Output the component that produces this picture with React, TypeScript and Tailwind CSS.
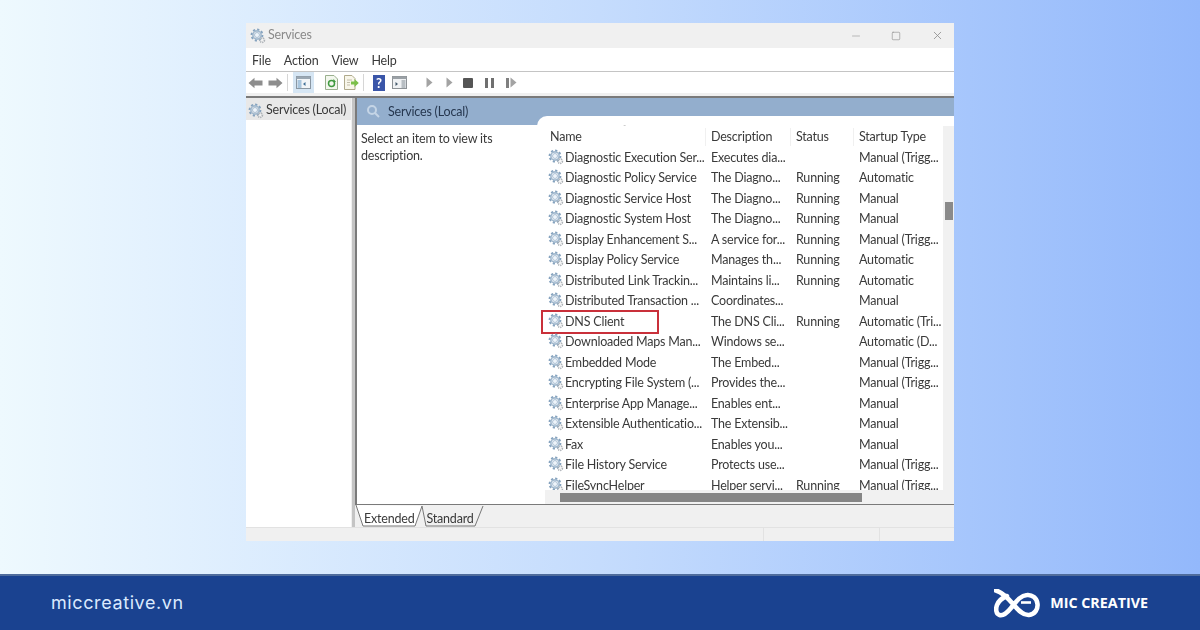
import { Minus, Square, X } from 'lucide-react';

interface ServiceRow {
  name: string;
  description: string;
  status: string;
  startup: string;
}

const rows: ServiceRow[] = [
  { name: 'Diagnostic Execution Ser...', description: 'Executes dia...', status: '', startup: 'Manual (Trigg...' },
  { name: 'Diagnostic Policy Service', description: 'The Diagno...', status: 'Running', startup: 'Automatic' },
  { name: 'Diagnostic Service Host', description: 'The Diagno...', status: 'Running', startup: 'Manual' },
  { name: 'Diagnostic System Host', description: 'The Diagno...', status: 'Running', startup: 'Manual' },
  { name: 'Display Enhancement S...', description: 'A service for...', status: 'Running', startup: 'Manual (Trigg...' },
  { name: 'Display Policy Service', description: 'Manages th...', status: 'Running', startup: 'Automatic' },
  { name: 'Distributed Link Trackin...', description: 'Maintains li...', status: 'Running', startup: 'Automatic' },
  { name: 'Distributed Transaction ...', description: 'Coordinates...', status: '', startup: 'Manual' },
  { name: 'DNS Client', description: 'The DNS Cli...', status: 'Running', startup: 'Automatic (Tri...' },
  { name: 'Downloaded Maps Man...', description: 'Windows se...', status: '', startup: 'Automatic (D...' },
  { name: 'Embedded Mode', description: 'The Embed...', status: '', startup: 'Manual (Trigg...' },
  { name: 'Encrypting File System (...', description: 'Provides the...', status: '', startup: 'Manual (Trigg...' },
  { name: 'Enterprise App Manage...', description: 'Enables ent...', status: '', startup: 'Manual' },
  { name: 'Extensible Authenticatio...', description: 'The Extensib...', status: '', startup: 'Manual' },
  { name: 'Fax', description: 'Enables you...', status: '', startup: 'Manual' },
  { name: 'File History Service', description: 'Protects use...', status: '', startup: 'Manual (Trigg...' },
  { name: 'FileSyncHelper', description: 'Helper servi...', status: 'Running', startup: 'Manual (Trigg...' },
];

function GearIcon({ className }: { className?: string }) {
  return (
    <svg viewBox="0 0 16 16" className={className} fill="none">
      <circle cx="7" cy="7" r="5.2" stroke="#85a2be" strokeWidth="2.4" strokeDasharray="2.1 1.9" />
      <circle cx="7" cy="7" r="4.1" stroke="#a3bacf" strokeWidth="1.6" />
      <circle cx="7" cy="7" r="2.5" fill="#eef4fa" stroke="#8faac4" strokeWidth="0.7" />
      <circle cx="12.2" cy="12.2" r="2.2" stroke="#adb2b7" strokeWidth="1.6" strokeDasharray="1.2 0.8" />
      <circle cx="12.2" cy="12.2" r="0.9" fill="#f2f2f2" />
    </svg>
  );
}

function ArrowIcon({ flip }: { flip?: boolean }) {
  return (
    <svg viewBox="0 0 15 12" className={`w-[15px] h-[12px] ${flip ? '-scale-x-100' : ''}`}>
      <path d="M0.5 6 L6.5 0.8 V3.6 H14.5 V8.4 H6.5 V11.2 Z" fill="#8d8d8d" />
    </svg>
  );
}

function PlayIcon() {
  return (
    <svg viewBox="0 0 7 11" className="w-[7px] h-[11px]">
      <path d="M0.5 0.5 L6.5 5.5 L0.5 10.5 Z" fill="#a3a3a3" />
    </svg>
  );
}

function Toolbar() {
  return (
    <div className="h-[21px] bg-white flex items-center pl-[2px]">
      <ArrowIcon />
      <span className="ml-[5px]"><ArrowIcon flip /></span>
      <span className="ml-[4px] w-px h-[17px] bg-[#d6d6d6]" />
      <span className="ml-[5px] w-[21px] h-[21px] bg-[#d6e6f4] flex items-center justify-center">
        <svg viewBox="0 0 15 13" className="w-[15px] h-[13px]">
          <rect x="0.5" y="0.5" width="14" height="12" fill="#f2f5f8" stroke="#8a97a3" />
          <rect x="0.5" y="0.5" width="14" height="2.5" fill="#9aa7b3" />
          <rect x="1.5" y="4" width="4" height="8" fill="#a9c6de" />
          <path d="M9.5 6 L7 8 L9.5 10 Z" fill="#3f6f96" />
        </svg>
      </span>
      <span className="ml-[11px]">
        <svg viewBox="0 0 13 15" className="w-[13px] h-[15px]">
          <path d="M0.5 0.5 H9 L12.5 4 V14.5 H0.5 Z" fill="#f3f7ee" stroke="#9ab08e" />
          <circle cx="6.500" cy="8.500" r="3" fill="none" stroke="#3f9a3f" strokeWidth="1.5" />
          <path d="M8.5 3.8 V7 H11 Z" fill="#3f9a3f" />
        </svg>
      </span>
      <span className="ml-[6px]">
        <svg viewBox="0 0 15 15" className="w-[15px] h-[15px]">
          <path d="M0.5 0.5 H8 L11 3.5 V14.5 H0.5 Z" fill="#f8f6ea" stroke="#b0aa8c" />
          <path d="M3 5 H8 M3 7.5 H6 M3 10 H6" stroke="#b5b09a" strokeWidth="0.8" />
          <path d="M7 6.5 H10.5 V4 L14.8 8 L10.5 12 V9.5 H7 Z" fill="#7cc04a" />
        </svg>
      </span>
      <span className="ml-[4px] w-px h-[17px] bg-[#d6d6d6]" />
      <span className="ml-[9px] w-[12px] h-[16px] bg-[#3a55a8] text-white text-[13px] leading-[16px] font-bold text-center">?</span>
      <span className="ml-[7px]">
        <svg viewBox="0 0 15 13" className="w-[15px] h-[13px]">
          <rect x="0.5" y="0.5" width="14" height="12" fill="#f0f2f4" stroke="#8d9296" />
          <rect x="0.5" y="0.5" width="14" height="2.5" fill="#9ba1a6" />
          <rect x="9.5" y="4" width="4" height="8" fill="#b8bec3" />
          <path d="M3.5 6 L6 8 L3.5 10 Z" fill="#44596b" />
        </svg>
      </span>
      <span className="ml-[19px]"><PlayIcon /></span>
      <span className="ml-[13px]"><PlayIcon /></span>
      <span className="ml-[10px] w-[10px] h-[10px] rounded-[1px] bg-[#555555]" />
      <span className="ml-[12px] flex gap-[3px]">
        <span className="w-[3px] h-[10px] bg-[#6f6f6f]" />
        <span className="w-[3px] h-[10px] bg-[#6f6f6f]" />
      </span>
      <span className="ml-[12px] flex items-center gap-[1px]">
        <span className="w-[3px] h-[10px] bg-[#7f7f7f]" />
        <PlayIcon />
      </span>
    </div>
  );
}

function ServiceList() {
  return (
    <div className="flex-1 -mt-[9px] bg-white rounded-tl-[10px] relative overflow-hidden pt-[10px] text-[#3a3a3a]">
      <div className="h-[22px] grid grid-cols-[155px_85px_63px_1fr] items-center pl-[13px]">
        <span>Name</span>
        <span className="border-l border-[#f0f0f0] pl-[5px]">Description</span>
        <span className="border-l border-[#f0f0f0] pl-[5px]">Status</span>
        <span className="border-l border-[#f0f0f0] pl-[5px]">Startup Type</span>
      </div>
      <div className="absolute left-[86px] top-[8px] text-[8px] leading-none text-[#b5b5b5]">ˆ</div>
      {rows.map((row) => (
        <div key={row.name} className="relative h-[20.5px] grid grid-cols-[157px_85px_63px_1fr] items-center whitespace-nowrap pl-[11px]">
          <span className="flex items-center gap-[1px]">
            <GearIcon className="w-[16px] h-[16px] shrink-0 -mt-[3px]" />
            {row.name}
          </span>
          <span className="pl-[6px]">{row.description}</span>
          <span className="pl-[6px]">{row.status}</span>
          <span className="pl-[6px]">{row.startup}</span>
          {row.name === 'DNS Client' && (
            <span className="absolute left-[4px] top-[-2px] w-[118px] h-[24px] border-2 border-[#c9303a]" />
          )}
        </div>
      ))}
      {/* scrollbars */}
      <div className="absolute right-0 top-[10px] w-[11px] bottom-0 bg-[#f1f1f1]">
        <div className="absolute left-[2px] right-[1px] top-[76px] h-[18px] bg-[#8a8a8a]" />
      </div>
      <div className="absolute left-[8px] right-0 bottom-0 h-[14px] bg-[#f1f1f1]">
        <div className="absolute left-[15px] w-[302px] top-[3px] h-[9px] bg-[#858585]" />
      </div>
    </div>
  );
}

export default function App() {
  return (
    <div className="w-[1200px] h-[630px] overflow-hidden flex flex-col bg-linear-to-r from-[#eef9fe] via-[#c5dcfd] to-[#93b8fb] font-['Lato',sans-serif]">
      <main className="flex-1 flex justify-center pt-[23px]">
        <div className="w-[708px] h-[518px] flex flex-col bg-[#f0f0f0] text-[12.5px] tracking-[-0.2px] text-[#3a3a3a] blur-[0.35px]">
          <div className="h-[25px] flex items-center pl-[4px] pr-[10px] bg-[#f0f0f0]">
            <GearIcon className="w-[16px] h-[16px]" />
            <span className="ml-[2px] text-[#8a8a8a]">Services</span>
            <Minus className="ml-auto w-[12px] h-[12px] text-[#a5a5a5]" strokeWidth={1.5} />
            <Square className="ml-[29px] w-[10px] h-[10px] text-[#8d8d8d]" strokeWidth={1.5} />
            <X className="ml-[30px] w-[13px] h-[13px] text-[#8d8d8d]" strokeWidth={1.5} />
          </div>
          <div className="h-[24px] bg-white flex items-center gap-[13px] pl-[6px] pt-[3px] border-b border-[#c4c4c4]">
            <span>File</span>
            <span>Action</span>
            <span>View</span>
            <span>Help</span>
          </div>
          <Toolbar />
          <div className="h-[5px] bg-[#f0f0f0] border-b-2 border-[#7a7a7a]" />
          <div className="flex-1 flex min-h-0">
            <div className="w-[105px] bg-white">
              <div className="h-[22px] bg-[#e8e8e8] flex items-center gap-[2px] pl-[2px] pt-[3px] whitespace-nowrap">
                <GearIcon className="w-[16px] h-[16px] shrink-0" />
                Services (Local)
              </div>
            </div>
            <div className="w-[4px] bg-[#c4c4c4] border-l border-[#f0f0f0]" />
            <div className="flex-1 flex flex-col min-w-0">
              <div className="flex-1 flex flex-col min-h-0 bg-white border-l-2 border-b border-[#7a7a7a]">
                <div className="h-[27px] bg-[#93aecd] flex items-center pl-[9px] pb-[1px] shrink-0">
                  <svg viewBox="0 0 14 14" className="w-[14px] h-[14px]" fill="none" stroke="#c5d5e6" strokeWidth="2">
                    <circle cx="6" cy="6" r="4" />
                    <path d="M9 9 L13 13" />
                  </svg>
                  <span className="ml-[8px] pt-[3px] text-[#26374f]">Services (Local)</span>
                </div>
                <div className="flex-1 flex min-h-0">
                  <div className="w-[180px] shrink-0 pl-[4px] pt-[5px] leading-[17px]">
                    Select an item to view its description.
                  </div>
                  <ServiceList />
                </div>
              </div>
              {/* tabs */}
              <div className="h-[22px] shrink-0 relative flex pl-[9px] pt-[5px] leading-[17px]">
                <svg viewBox="0 0 130 22" className="absolute left-0 top-0 w-[130px] h-[22px]" fill="none">
                  <path d="M1 0 L8 21 H60 L67 1 H128 L120 21 H71 L67 1" fill="#f0f0f0" stroke="none" />
                  <path d="M1 0 L8 21 H60 L67 1 Z" fill="#ffffff" stroke="none" />
                  <path d="M1 0 L8 21 H60 L67 1 L71 21 H120 L128 1" stroke="#777777" strokeWidth="1" />
                </svg>
                <span className="relative">Extended</span>
                <span className="relative ml-[12px]">Standard</span>
              </div>
            </div>
          </div>
          <div className="h-[14px] bg-[#f0f0f0] border-t border-[#e2e2e2] flex pl-[517px]">
            <span className="w-[117px] border-x border-[#e2e2e2]" />
          </div>
        </div>
      </main>
      <footer className="h-[56px] shrink-0 bg-[#1a4290] border-t-2 border-[#4f6c9c] flex items-center justify-between pl-[51px] pr-[52px]">
        <span className="text-[18px] tracking-[0.6px] pb-[2px] text-[#dbeafe] font-['Inter',sans-serif]">miccreative.vn</span>
        <div className="flex items-center gap-[10px]">
          <svg viewBox="0 0 46 29" className="w-[46px] h-[29px]" fill="none" stroke="#ffffff" strokeWidth="4.6">
            <path d="M2 1.500 C7 3 13 8 19 15 C24 21 29 26.500 35 26 C41 25.500 44 20 43.500 15 C43 9 38 5.500 33 6 C26 6.500 22 13 17 19 C13 24 9 27 5.500 26 C2 25 1.500 20 3 16 C5 11 9 8.500 13 7" strokeLinecap="round" />
            <path d="M27 13.500 H37" strokeWidth="2.6" />
          </svg>
          <span className="text-[14.3px] font-bold text-white font-['Open_Sans',sans-serif]">MIC CREATIVE</span>
        </div>
      </footer>
    </div>
  );
}
